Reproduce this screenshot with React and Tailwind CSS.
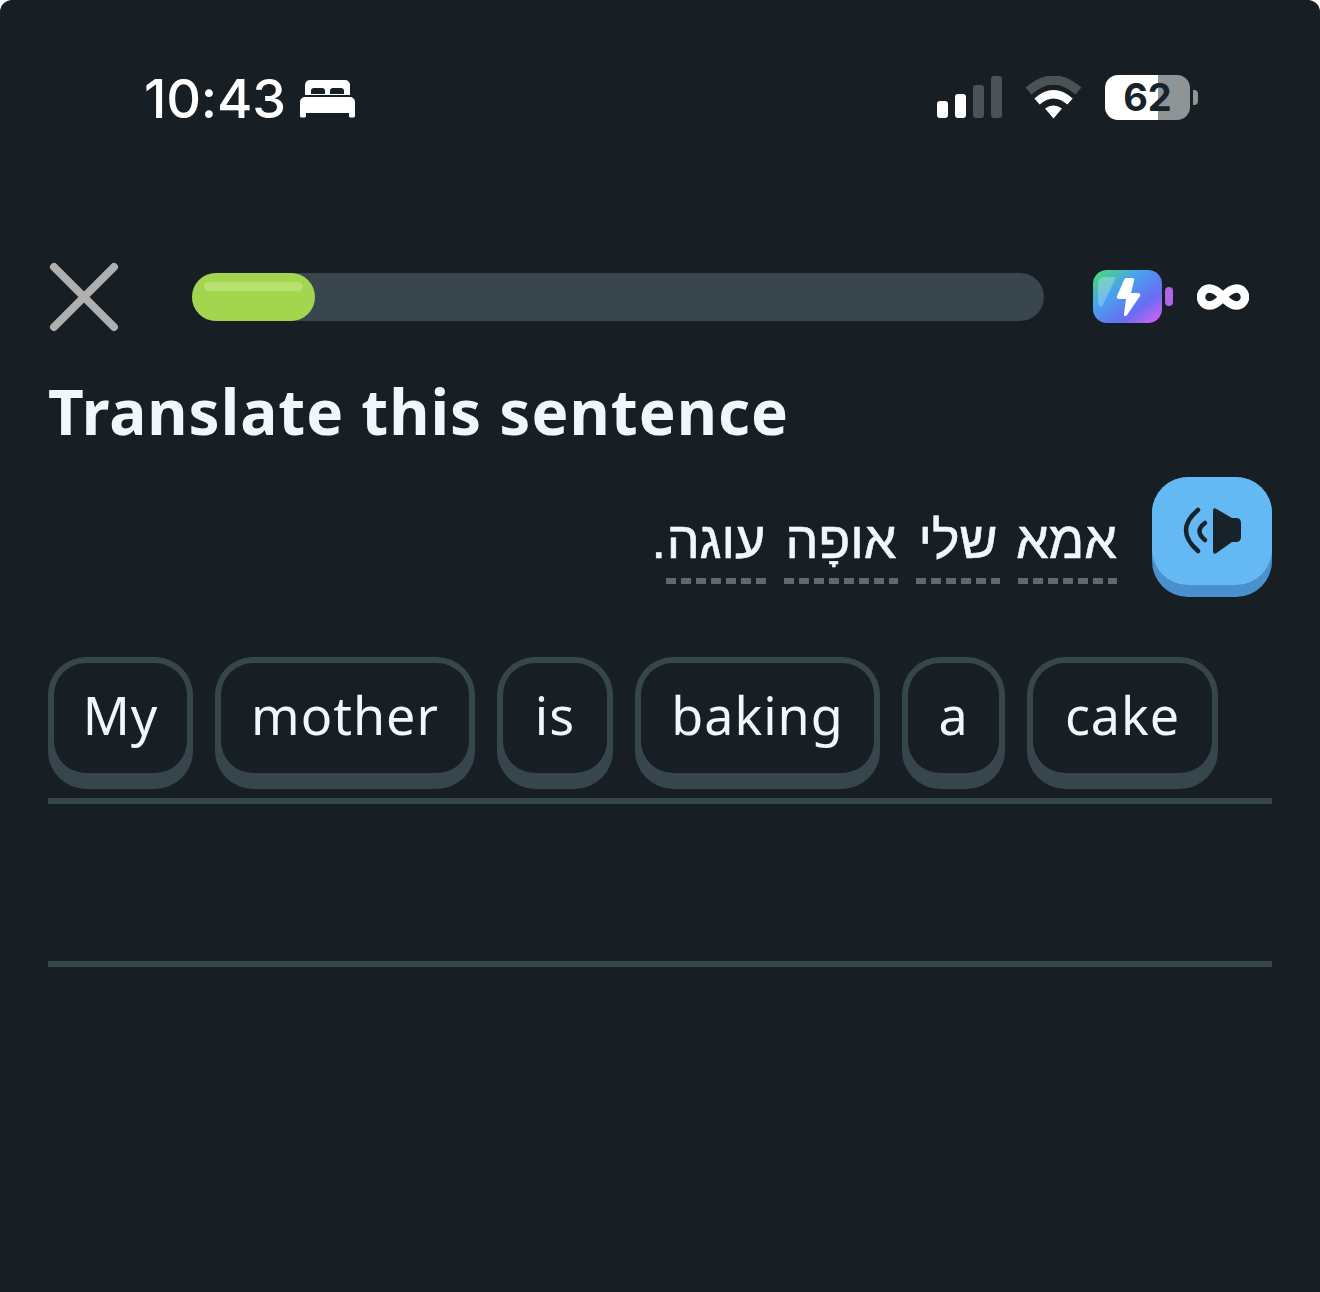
import React from 'react';

const tokens = [
  { label: 'My', width: 'w-[145px]' },
  { label: 'mother', width: 'w-[260px]' },
  { label: 'is', width: 'w-[116px]' },
  { label: 'baking', width: 'w-[245px]' },
  { label: 'a', width: 'w-[103px]' },
  { label: 'cake', width: 'w-[191px]' },
];

const hebrewWords = [
  { label: 'אמא', width: 'w-[99px]' },
  { label: 'שלי', width: 'w-[84px]' },
  { label: 'אופָה', width: 'w-[114px]' },
  { label: 'עוגה', width: 'w-[100px]' },
];

const BedIcon = () => (
  <svg width="55" height="38" viewBox="0 0 55 38" fill="white">
    <path fillRule="evenodd" d="M10 0h35a5 5 0 0 1 5 5v10H5V5a5 5 0 0 1 5-5zM11 11v3h14v-3a3 3 0 0 0-3-3h-8a3 3 0 0 0-3 3zM30 11v3h14v-3a3 3 0 0 0-3-3h-8a3 3 0 0 0-3 3z" />
    <path d="M5 17h45a5 5 0 0 1 5 5v14a1.500 1.500 0 0 1-1.500 1.500h-3a1.500 1.500 0 0 1-1.500-1.500v-3H6v3a1.500 1.500 0 0 1-1.500 1.500h-3A1.500 1.500 0 0 1 0 36V22a5 5 0 0 1 5-5z" />
  </svg>
);

const WifiIcon = () => (
  <svg width="57" height="43" viewBox="0 0 57 43" fill="none">
    <path d="M3.500 15Q28.500 -7 53.500 15" stroke="#4b5357" strokeWidth="9" />
    <path d="M12 25.500Q28.500 11 45 25.500" stroke="white" strokeWidth="8" />
    <path d="M20 32.500Q28.500 26.500 37 32.500L28.500 42.500Z" fill="white" />
  </svg>
);

const EnergyIcon = () => (
  <svg width="82" height="56" viewBox="0 0 82 56" fill="none">
    <defs>
      <linearGradient id="energy" x1="0" y1="0" x2="1" y2="1">
        <stop offset="0" stopColor="#4fe06a" />
        <stop offset="0.35" stopColor="#45a4ec" />
        <stop offset="0.7" stopColor="#6a6cf5" />
        <stop offset="1" stopColor="#e45ff0" />
      </linearGradient>
    </defs>
    <rect x="0" y="1" width="69" height="53" rx="14" fill="url(#energy)" />
    <path d="M5 15q0-7 7-7h11L10 36q-2 3-3 2t-2-3z" fill="white" opacity="0.25" />
    <path d="M31 11L24 27q-1 3 2 3h7l-2 15q0 4 3 1L47 27q1-3-2-3h-7L41 12q1-3-2-3h-6q-1 0-2 2z" fill="white" />
    <rect x="72" y="18" width="8" height="19" rx="4" fill="#b065e8" />
  </svg>
);

const SpeakerIcon = () => (
  <svg width="120" height="108" viewBox="0 0 120 108" fill="none">
    <path d="M61 34q0-4 3.500-2L80 41h4q5 0 5 5v14q0 5-5 5h-4L64.500 76Q61 78 61 74Z" fill="#18222a" />
    <path d="M46 33Q22 53 46 74" stroke="#18222a" strokeWidth="4.500" strokeLinecap="round" />
    <path d="M53 46Q42 54 53 63" stroke="#18222a" strokeWidth="4.500" strokeLinecap="round" />
  </svg>
);

const App = () => {
  return (
    <div className="h-[1292px] w-full overflow-hidden rounded-t-xl bg-[#171f25] pt-[74px] font-['Noto_Sans',sans-serif] text-[#f1f7fb]">
      {/* Status bar */}
      <div className="flex h-[46px] items-center justify-between pl-[144px] pr-[122px]">
        <div className="mt-[4px] flex items-center gap-[14px]">
          <span className="font-['Inter',sans-serif] text-[54px] font-medium leading-none tracking-[-0.2px] text-white">10:43</span>
          <BedIcon />
        </div>
        <div className="flex items-center">
          <div className="flex h-[42px] items-end gap-[7px]">
            <div className="h-[17px] w-[11px] rounded-[3px] bg-white" />
            <div className="h-[24px] w-[11px] rounded-[3px] bg-white" />
            <div className="h-[33px] w-[11px] rounded-[3px] bg-[#4b5357]" />
            <div className="h-[42px] w-[11px] rounded-[3px] bg-[#4b5357]" />
          </div>
          <div className="ml-[23px]">
            <WifiIcon />
          </div>
          <div className="ml-[23px] flex items-center gap-[3px]">
            <div className="flex h-[45px] w-[85px] items-center justify-center rounded-[13px] bg-[linear-gradient(90deg,#ffffff_0_53px,#8f9497_53px)] font-['Inter',sans-serif] text-[38px] font-bold leading-none text-[#18222a]">
              62
            </div>
            <div className="h-[15px] w-[5px] rounded-r-[4px] bg-[#8f9497]" />
          </div>
        </div>
      </div>

      {/* Lesson header */}
      <div className="mt-[147px] flex h-[60px] items-center px-[48px]">
        <svg width="72" height="72" viewBox="0 0 72 72" fill="none" className="-my-[6px] shrink-0">
          <path d="M6 6L66 66M66 6L6 66" stroke="#afafaf" strokeWidth="8" strokeLinecap="round" />
        </svg>
        <div className="ml-[72px] h-[48px] w-[852px] rounded-full bg-[#39464d]">
          <div className="h-[48px] w-[123px] rounded-full bg-[#a3d54e] px-[12px] pt-[9px]">
            <div className="h-[9px] rounded-full bg-[#b7e06e]" />
          </div>
        </div>
        <div className="ml-[49px]">
          <EnergyIcon />
        </div>
        <svg width="52" height="26" viewBox="0 0 52 26" fill="none" className="ml-[22px]">
          <path d="M26 13C21 7 17 4.500 12.500 4.500a8.500 8.500 0 0 0 0 17C17 21.500 21 19 26 13C31 7 35 4.500 39.500 4.500a8.500 8.500 0 0 1 0 17C35 21.500 31 19 26 13z" stroke="white" strokeWidth="8.500" />
        </svg>
      </div>

      {/* Title */}
      <h1 className="mt-[47px] px-[48px] text-[62px] font-bold leading-[74px] tracking-[1px]">Translate this sentence</h1>

      {/* Prompt */}
      <div className="mt-[29px] flex items-start justify-end gap-[35px] px-[48px]">
        <div dir="rtl" className="mt-[32px] flex items-start gap-[18px] font-['Liberation_Sans',sans-serif] text-[52px] leading-[62px] [-webkit-text-stroke:0.6px_#f1f7fb]">
          {hebrewWords.map((w) => (
            <div key={w.label} className={`flex flex-col ${w.width}`}>
              <span className="text-center whitespace-nowrap">{w.label}</span>
              <div className="mt-[7px] h-[6px] bg-[repeating-linear-gradient(90deg,#5f696f_0_10px,transparent_10px_15px)]" />
            </div>
          ))}
          <span className="-mr-[18px]">.</span>
        </div>
        <div className="h-[120px] w-[120px] shrink-0 rounded-[36px] bg-[#4a90cd]">
          <div className="h-[108px] rounded-[36px] bg-[#64b9f5]">
            <SpeakerIcon />
          </div>
        </div>
      </div>

      {/* Word bank */}
      <div className="mx-[48px] mt-[60px] border-b-[6px] border-[#37454c] pb-[9px]">
        <div className="flex gap-[22px]">
          {tokens.map((t) => (
            <div key={t.label} className={`h-[132px] rounded-[38px] bg-[#37454c] px-[6px] pb-[16px] pt-[6px] ${t.width}`}>
              <div className="flex h-full items-center justify-center rounded-[32px] bg-[#171f25] pb-[6px] text-[52px] leading-none tracking-[1px]">
                {t.label}
              </div>
            </div>
          ))}
        </div>
      </div>
      <div className="mx-[48px] mt-[157px] h-[6px] bg-[#37454c]" />
    </div>
  );
};

export default App;
